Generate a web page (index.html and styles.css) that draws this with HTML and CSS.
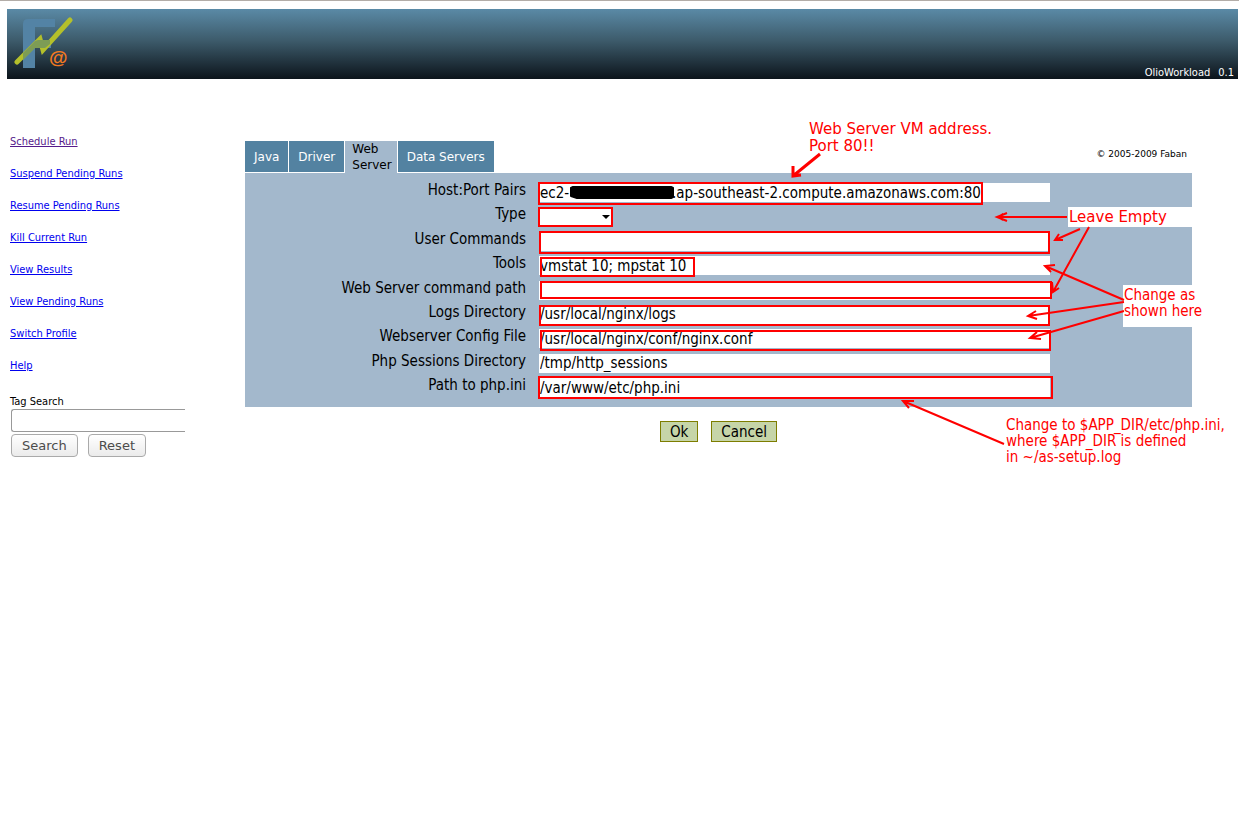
FILE: index.html
```html
<!DOCTYPE html>
<html lang="en">
<head>
<meta charset="utf-8">
<title>OlioWorkload</title>
<link rel="stylesheet" href="styles.css">
</head>
<body>
<header class="banner">
  <svg class="logo" width="64" height="56" viewBox="0 0 64 56" role="img" aria-label="Faban">
    <path d="M9 52V8Q9 3 14 3H41V11H21V24H37V32H21V52Z" fill="#5383a5"/>
    <path d="M3 46L26 23L29 34L56 4" fill="none" stroke="#b4c02b" stroke-width="5" stroke-linecap="round" stroke-linejoin="miter"/>
    <path d="M9 37L21 25V32L9 44ZM21 25L24 24H36V28L31 32H21Z" fill="#7d9c55"/>
    <text class="logo-at" x="35" y="48">@</text>
  </svg>
  <div class="product"><span>OlioWorkload</span><span>0.1</span></div>
</header>
<div class="page">
  <aside class="sidebar">
    <nav class="links">
      <a class="visited" href="#">Schedule Run</a>
      <a href="#">Suspend Pending Runs</a>
      <a href="#">Resume Pending Runs</a>
      <a href="#">Kill Current Run</a>
      <a href="#">View Results</a>
      <a href="#">View Pending Runs</a>
      <a href="#">Switch Profile</a>
      <a href="#">Help</a>
    </nav>
    <form class="search">
      <label for="tag">Tag Search</label>
      <input id="tag" type="text">
      <div class="search-buttons">
        <button type="button">Search</button>
        <button type="reset">Reset</button>
      </div>
    </form>
  </aside>
  <main class="main">
    <div class="topline">
      <div class="tabs" role="tablist">
        <button class="tab" role="tab">Java</button>
        <button class="tab" role="tab">Driver</button>
        <button class="tab active" role="tab" aria-selected="true">Web<br>Server</button>
        <button class="tab" role="tab">Data Servers</button>
      </div>
      <small class="copyright">© 2005-2009 Faban</small>
    </div>
    <form>
      <div class="panel">
        <label for="f1">Host:Port Pairs</label><input id="f1" type="text" value="ec2-                      2.ap-southeast-2.compute.amazonaws.com:80">
        <label for="f2">Type</label><span class="pick"><select id="f2"><option></option></select></span>
        <label for="f3">User Commands</label><input id="f3" type="text">
        <label for="f4">Tools</label><input id="f4" type="text" value="vmstat 10; mpstat 10">
        <label for="f5">Web Server command path</label><input id="f5" type="text">
        <label for="f6">Logs Directory</label><input id="f6" type="text" value="/usr/local/nginx/logs">
        <label for="f7">Webserver Config File</label><input id="f7" type="text" value="/usr/local/nginx/conf/nginx.conf">
        <label for="f8">Php Sessions Directory</label><input id="f8" type="text" value="/tmp/http_sessions">
        <label for="f9">Path to php.ini</label><input id="f9" type="text" value="/var/www/etc/php.ini">
      </div>
      <div class="actions">
        <button type="button">Ok</button>
        <button type="button">Cancel</button>
      </div>
    </form>
  </main>
</div>
<div class="notes">
  <svg class="marks" width="1239" height="480" viewBox="0 0 1239 480" aria-hidden="true">
    <path class="redact" d="M573 187H671L673 188V197L671 198H577L571 196V188Z"/>
    <g class="cover">
      <rect x="1068" y="207" width="126" height="20"/>
      <rect x="1123" y="285" width="80" height="42"/>
    </g>
    <g class="box">
      <rect x="539" y="183" width="443" height="21"/>
      <rect x="539" y="208" width="73" height="18"/>
      <rect x="540" y="232" width="509" height="21"/>
      <rect x="541" y="258" width="153" height="18"/>
      <rect x="541" y="282" width="510" height="16"/>
      <rect x="540" y="306" width="509" height="19"/>
      <rect x="541" y="331" width="509" height="19"/>
      <rect x="539" y="377" width="513" height="21"/>
    </g>
    <g class="arrow">
      <path class="thick" d="M820 154L793 176M793 166V176L801 175"/>
      <path d="M1067 217H997M1007 213L997 217L1007 221M1003 214L998 217L1003 220"/>
      <path d="M1080 229L1055 240M1059 234L1055 240L1063 240"/>
      <path d="M1089 227L1053 292M1052 282L1053 292L1059 288"/>
      <path d="M1124 300L1045 266M1055 265L1045 266L1051 272"/>
      <path d="M1124 302L1028 316M1036 311L1028 316L1037 319"/>
      <path d="M1124 311L1030 338M1037 332L1030 338L1041 339"/>
      <path d="M1004 444L903 401M914 401L903 401L909 408"/>
    </g>
  </svg>
  <p class="note wide note-host">Web Server VM address.<br>Port 80!!</p>
  <p class="note wide note-empty">Leave Empty</p>
  <p class="note note-change">Change as<br>shown here</p>
  <p class="note note-path">Change to $APP_DIR/etc/php.ini,<br>where $APP_DIR is defined<br>in ~/as-setup.log</p>
</div>
</body>
</html>
```
FILE: styles.css
```css
* { box-sizing: border-box; }
body {
  margin: 0;
  min-height: 100vh;
  padding: 8px 1px 0 7px;
  border-top: 1px solid #b3ada8;
  position: relative;
  background: #fff;
  color: #000;
  font: 15px/16px "DejaVu Sans Condensed", "DejaVu Sans", sans-serif;
}
button, input, select { font: inherit; color: inherit; }
.banner {
  display: flex;
  justify-content: space-between;
  align-items: flex-end;
  height: 70px;
  padding: 0 4px 0 7px;
  background: linear-gradient(#5a8aa6, #3d5b6b 45%, #0c141b);
}
.logo { align-self: center; }
.logo-at { font: bold 19px "Liberation Sans", sans-serif; fill: #f47a20; }
.product {
  display: flex;
  gap: 8px;
  color: #fff;
  font-size: 11px;
  line-height: 12px;
}
.page { display: flex; padding: 55px 46px 0 3px; }
.sidebar { width: 235px; font-size: 11px; line-height: 16px; }
.links { display: flex; flex-direction: column; align-items: flex-start; gap: 16px; }
.links a { color: #00e; }
.links a.visited { color: #551a8b; }
.search { padding-top: 20px; }
.search label { display: block; line-height: 15px; }
.search input {
  display: block;
  width: 174px;
  height: 23px;
  margin-left: 1px;
  border: 1px solid #999;
  border-right: 0;
  border-radius: 3px 0 0 3px;
}
.search-buttons { display: flex; gap: 10px; padding: 2px 1px; }
.search-buttons button {
  height: 23px;
  padding: 0 10px;
  border: 1px solid #aaa;
  border-radius: 4px;
  background: linear-gradient(#fff, #ebebeb);
  color: #4c4c4c;
  font: 13px/16px "DejaVu Sans", sans-serif;
}
.main { flex: 1; padding-top: 7px; }
.topline { display: flex; justify-content: space-between; align-items: flex-start; }
.tabs { display: flex; gap: 1px; }
.tab {
  height: 31px;
  padding: 0 9px;
  border: 0;
  background: #5382a1;
  color: #fff;
  font: 12px/16px "DejaVu Sans", sans-serif;
}
.tab.active {
  height: 32px;
  padding: 0 5px 0 7px;
  background: #a3b8cc;
  color: #000;
  text-align: left;
}
.copyright { padding: 5px 5px 0 0; font: 9px/16px "DejaVu Sans", sans-serif; }
.panel {
  display: grid;
  grid-template-columns: 281fr 511fr 129fr;
  column-gap: 13px;
  align-content: space-between;
  min-height: 234px;
  padding: 10px 0;
  background: #a3b8cc;
}
.panel label { grid-column: 1; height: 19px; line-height: 15px; text-align: right; }
.panel input {
  width: 100%;
  height: 19px;
  padding: 0 1px;
  border: 0;
  background: #fff;
}
.pick { position: relative; width: 73px; height: 19px; background: #fff; }
.pick::after {
  content: "";
  position: absolute;
  right: 2px;
  top: 8px;
  border: 4px solid transparent;
  border-top-color: #000;
  pointer-events: none;
}
.pick select { width: 100%; height: 19px; border: 0; appearance: none; background: transparent; }
.actions { display: flex; justify-content: center; gap: 13px; padding: 14px 0 0; }
.actions button {
  height: 21px;
  padding: 0 9px;
  border: 1px solid #7d7d00;
  background: #c6d5a8;
}
.notes { position: absolute; left: 0; top: -1px; pointer-events: none; color: #f00; }
.marks { display: block; }
.redact { fill: #000; stroke: #000; stroke-width: 2; stroke-linejoin: round; }
.cover { fill: #fff; }
.box, .arrow { fill: none; stroke: #f00; stroke-width: 2; }
.arrow .thick { stroke-width: 3; }
.note { position: absolute; margin: 0; white-space: nowrap; }
.wide { font: 15px/17px "DejaVu Sans", sans-serif; }
.note-host { left: 809px; top: 121px; }
.note-empty { left: 1069px; top: 209px; }
.note-change { left: 1124px; top: 287px; }
.note-path { left: 1006px; top: 417px; }
```
